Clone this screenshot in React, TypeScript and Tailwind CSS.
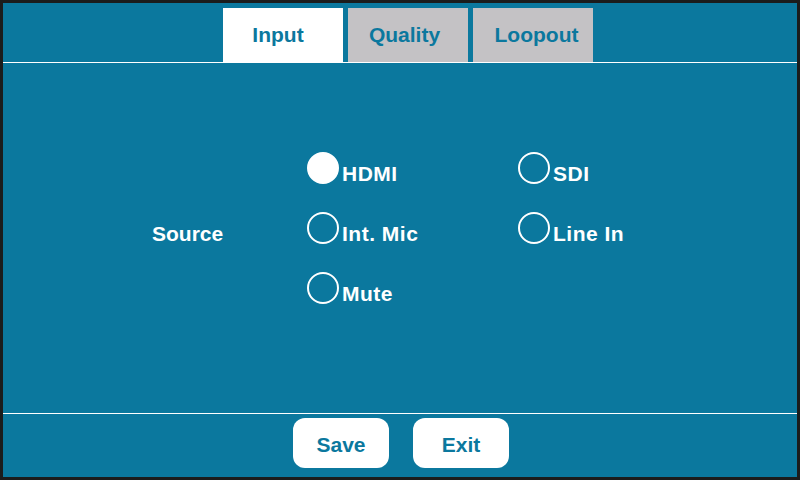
const tabs = [
    { label: "Input", active: true, shift: "pr-[10px]" },
    { label: "Quality", active: false, shift: "pr-[7px]" },
    { label: "Loopout", active: false, shift: "pl-[7px]" },
];

function Radio({ label, checked = false }: { label: string; checked?: boolean }) {
    return (
        <div className="flex items-start gap-[3px]">
            <div
                className={`w-[32px] h-[32px] rounded-full border-2 border-white shrink-0 ${checked ? "bg-white" : ""}`}
            />
            <span className="mt-[10px] text-[21px] leading-[23px] tracking-[0.5px] font-bold text-white">{label}</span>
        </div>
    );
}

export default function App() {
    return (
        <div
            className="w-[800px] h-[480px] bg-[#1b1c1c] p-[3px]"
            style={{ fontFamily: '"Liberation Sans", Arial, sans-serif' }}
        >
            <div className="h-full bg-[#0b789e] flex flex-col">
                {/* Tab bar */}
                <div className="h-[60px] shrink-0 pt-[5px] pl-[220px] flex gap-[5px] border-b border-white">
                    {tabs.map((tab) => (
                        <div
                            key={tab.label}
                            className={`w-[120px] h-[54px] flex items-center justify-center text-[21px] font-bold text-[#0b789e] ${tab.shift} ${tab.active ? "bg-white" : "bg-[#c4c2c5]"}`}
                        >
                            {tab.label}
                        </div>
                    ))}
                </div>

                {/* Settings */}
                <div className="h-[351px] shrink-0 pt-[89px] border-b border-white">
                    <div className="grid grid-cols-[304px_211px_auto] auto-rows-[60px]">
                        <div />
                        <Radio label="HDMI" checked />
                        <Radio label="SDI" />
                        <div className="pl-[149px] pt-[10px] text-[21px] leading-[23px] font-bold text-white">Source</div>
                        <Radio label="Int. Mic" />
                        <Radio label="Line In" />
                        <div />
                        <Radio label="Mute" />
                        <div />
                    </div>
                </div>

                {/* Footer */}
                <div className="flex-1 flex justify-center gap-[24px] pt-[4px] pl-[2px]">
                    <button className="w-[96px] h-[50px] pt-[3px] rounded-[12px] bg-white text-[#0b789e] text-[21px] font-bold">
                        Save
                    </button>
                    <button className="w-[96px] h-[50px] pt-[3px] rounded-[12px] bg-white text-[#0b789e] text-[21px] font-bold">
                        Exit
                    </button>
                </div>
            </div>
        </div>
    );
}
